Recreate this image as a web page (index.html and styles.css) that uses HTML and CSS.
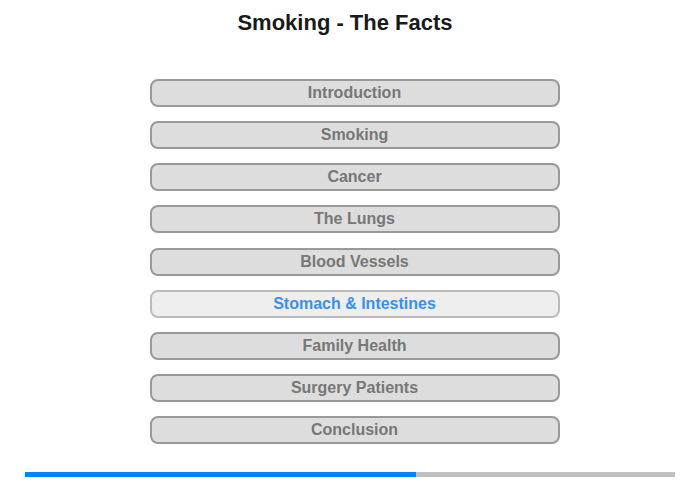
FILE: index.html
```html
<!DOCTYPE html>
<html lang="en">
<head>
    <meta charset="UTF-8">
    <meta name="viewport" content="width=device-width, initial-scale=1.0">
    <title>Smoking - The Facts</title>
    <link rel="stylesheet" href="styles.css">
</head>
<body>

    <h1>Smoking - The Facts</h1>

    <div class="menu">
        <div class="item">Introduction</div>
        <div class="item">Smoking</div>
        <div class="item">Cancer</div>
        <div class="item">The Lungs</div>
        <div class="item">Blood Vessels</div>
        <div class="item active">Stomach &amp; Intestines</div>
        <div class="item">Family Health</div>
        <div class="item">Surgery Patients</div>
        <div class="item">Conclusion</div>
    </div>

    <div class="progress">
        <div class="progress-fill" style="width: 60.2%"></div>
    </div>

</body>
</html>
```

FILE: styles.css
```css
body {
    font-family: "Liberation Sans", Arial, sans-serif;
    background-color: #fff;
    margin: 0;
    padding: 0;
}

h1 {
    text-align: center;
    font-size: 22px;
    color: #1a1a1a;
    margin: 0;
    padding: 10px 10px 0 0;
    height: 79px;
    box-sizing: border-box;
}

.menu {
    display: flex;
    flex-direction: column;
    align-items: center;
    gap: 14.15px;
    padding-left: 9px;
}

.item {
    width: 410px;
    height: 28px;
    box-sizing: border-box;
    border: 2px solid #999;
    border-radius: 8px;
    background-color: #ddd;
    color: #777;
    font-size: 16px;
    font-weight: bold;
    text-align: center;
    line-height: 24px;
    cursor: pointer;
}

.item.active {
    background-color: #eee;
    border-color: #bbb;
    color: #3a8ef2;
}

.progress {
    margin: 28px 25px 0;
    height: 5px;
    background-color: #c0c0c0;
}

.progress-fill {
    height: 100%;
    background-color: #0084ff;
}
```
